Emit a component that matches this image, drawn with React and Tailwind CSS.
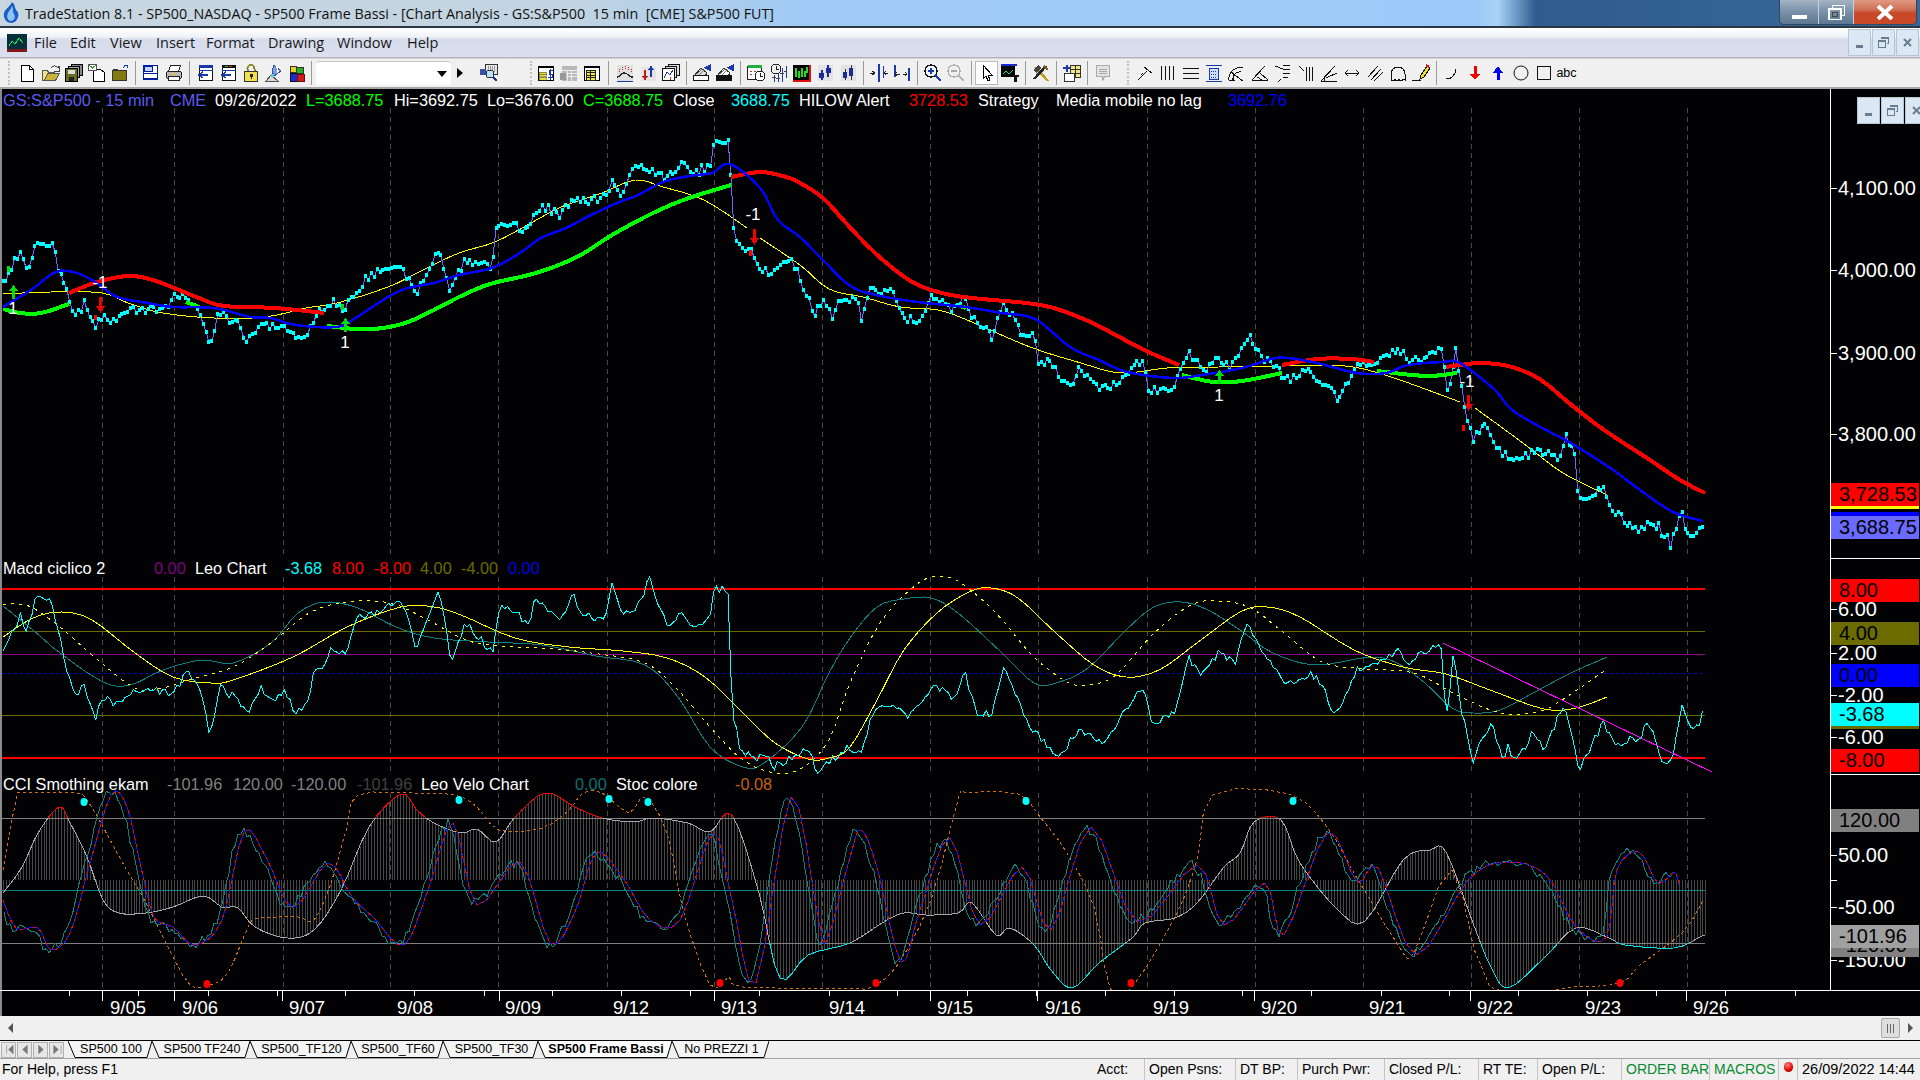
const parse = (s) => s.trim().split(/\s+/).map((p) => p.split(",").map(Number));

// small seeded random so the noisy series stay the same between renders
function rng(seed) {
  let a = seed;
  return () => {
    a = (a * 1664525 + 1013904223) % 4294967296;
    return a / 4294967296;
  };
}

const toStr = (pts) => pts.map((p) => `${p[0].toFixed(1)},${p[1].toFixed(1)}`).join(" ");

function smooth(pts, n = 4) {
  const out = [];
  for (let i = 0; i < pts.length - 1; i++) {
    const p0 = pts[Math.max(i - 1, 0)];
    const p1 = pts[i];
    const p2 = pts[i + 1];
    const p3 = pts[Math.min(i + 2, pts.length - 1)];
    for (let j = 0; j < n; j++) {
      const t = j / n;
      const f = (a, b, c, d) =>
        0.5 * (2 * b + (c - a) * t + (2 * a - 5 * b + 4 * c - d) * t * t + (3 * b - a - 3 * c + d) * t * t * t);
      out.push([f(p0[0], p1[0], p2[0], p3[0]), f(p0[1], p1[1], p2[1], p3[1])]);
    }
  }
  out.push(pts[pts.length - 1]);
  return out;
}

function interp(pts, x) {
  for (let i = 0; i < pts.length - 1; i++) {
    if (x >= pts[i][0] && x <= pts[i + 1][0]) {
      const t = (x - pts[i][0]) / (pts[i + 1][0] - pts[i][0] || 1);
      return pts[i][1] + (pts[i + 1][1] - pts[i][1]) * t;
    }
  }
  return pts[pts.length - 1][1];
}

function jag(pts, step, amp, seed) {
  const r = rng(seed);
  const out = [];
  const x0 = pts[0][0];
  const x1 = pts[pts.length - 1][0];
  for (let x = x0; x <= x1; x += step) {
    out.push([x, interp(pts, x) + (r() - 0.5) * amp]);
  }
  return out;
}

const priceKeys = parse(`3,283 10,270 20,252 26,272 36,243 54,244 57,265 64,283 67,293 76,317 84,303 96,332 99,317 115,321 128,310 168,308 176,295 189,298 202,317 210,346 219,310 227,318 237,323 247,341 260,325 283,327 296,339 309,332 316,315 332,302 344,308 352,297 367,278 383,267 403,272 416,293 423,282 439,250 449,290 464,262 482,263 492,268 497,223 515,225 526,232 541,205 561,215 569,203 605,198 612,182 621,193 638,163 663,178 686,163 694,173 712,165 713,142 730,140 732,223 737,243 753,253 758,267 770,273 791,260 800,277 814,315 823,300 832,317 840,302 857,297 861,322 869,290 892,292 906,318 921,322 929,297 955,310 964,295 972,317 992,337 1004,303 1024,337 1035,337 1038,363 1047,360 1070,388 1078,368 1101,388 1121,383 1127,372 1144,360 1147,390 1173,390 1188,352 1205,372 1216,358 1231,368 1251,337 1259,353 1288,380 1308,368 1337,398 1357,367 1400,350 1411,362 1442,349 1448,400 1456,350 1465,410 1473,442 1483,422 1503,455 1518,460 1538,450 1558,460 1566,433 1575,458 1579,502 1604,488 1612,510 1640,533 1648,520 1653,528 1659,523 1662,540 1667,537 1671,547 1675,530 1683,508 1686,533 1698,533 1701,523 1705,527`);
const price = jag(priceKeys, 2.9, 8, 7);

const blue = smooth(parse(`3,307 31,290 56,272 77,273 97,283 117,297 148,303 173,307 214,308 250,317 270,318 296,325 337,327 357,317 388,297 408,288 434,283 459,275 492,268 520,253 541,238 566,228 587,217 617,203 638,195 663,182 689,176 712,173 730,164 760,188 778,220 800,237 823,260 852,287 886,297 926,303 966,307 1001,313 1035,319 1070,347 1099,360 1127,372 1173,378 1202,375 1242,368 1271,359 1288,358 1317,363 1357,373 1386,373 1408,365 1443,362 1460,363 1495,390 1512,410 1546,430 1569,442 1609,467 1640,490 1673,512 1703,521`));
const yellow1 = smooth(parse(`3,294 51,292 102,293 128,303 163,313 214,318 265,317 306,308 337,303 388,287 423,270 459,253 495,242 531,223 561,207 602,193 635,180 663,187 704,200 747,228`));
const yellow2 = smooth(parse(`760,238 800,265 829,289 863,297 900,307 938,310 972,322 1030,347 1081,363 1121,373 1167,368 1219,367 1282,366 1345,366 1391,377 1460,402`));
const yellow3 = smooth(parse(`1475,408 1523,443 1563,473 1607,495`));

const thick = [
  ["#00ff00", `3,309 20,313 41,313 69,304`],
  ["#ff0000", `69,293 97,282 128,276 153,280 184,292 199,298 224,306 275,308 324,313`],
  ["#00ff00", `186,302 199,307`],
  ["#00ff00", `327,326 357,329 383,328 408,322 434,310 459,297 490,284 536,273 577,257 612,235 653,213 689,198 731,185`],
  ["#ff0000", `731,177 760,172 786,177 800,183 823,198 846,223 875,253 909,280 938,292 972,298 1041,305 1081,318 1110,332 1144,350 1179,365`],
  ["#00ff00", `960,306 966,308`],
  ["#00ff00", `1182,375 1213,382 1242,381 1282,373`],
  ["#ff0000", `1282,365 1317,359 1351,359 1374,362`],
  ["#00ff00", `1377,371 1426,376 1457,373`],
  ["#ff0000", `1446,367 1460,365 1483,363 1512,367 1541,380 1569,403 1604,430 1650,460 1680,480 1705,493`],
];

const gridX = [102, 174, 283, 390, 498, 607, 714, 822, 930, 1038, 1147, 1255, 1363, 1471, 1579, 1687];

const macd = jag(parse(`3,653 22,612 25,639 36,597 51,600 70,683 76,698 84,685 96,717 103,698 117,705 127,693 152,690 171,695 187,673 201,690 210,738 220,687 228,693 238,700 247,713 260,688 271,702 285,688 295,715 309,702 313,672 325,663 332,648 346,655 358,618 379,610 398,602 407,613 416,650 439,587 451,662 466,623 493,653 499,608 515,610 528,628 534,600 561,622 573,592 577,608 588,615 604,623 612,583 623,613 637,608 650,578 666,625 680,613 694,628 710,618 714,587 729,592 730,650 732,710 740,747 751,758 770,755 772,768 808,747 816,772 835,757 850,747 861,752 872,715 893,702 907,717 920,707 934,682 956,702 964,670 977,713 991,715 1004,668 1029,725 1040,738 1060,756 1080,728 1102,743 1116,725 1143,687 1152,723 1174,712 1189,657 1202,677 1219,653 1235,662 1248,620 1254,640 1270,663 1286,687 1311,673 1322,683 1335,717 1357,670 1384,660 1400,647 1406,663 1441,645 1446,722 1454,650 1462,713 1473,760 1492,720 1503,763 1507,745 1516,762 1533,732 1544,748 1565,703 1579,770 1603,723 1617,743 1640,738 1647,723 1653,733 1662,758 1672,762 1683,698 1687,723 1698,728 1702,713 1705,713`), 2.9, 8, 11);
const macdTeal = smooth(parse(`3,606 33,630 60,653 103,682 130,685 163,670 201,660 233,663 271,643 298,613 325,602 358,608 396,627 434,638 488,642 542,645 596,656 645,665 678,697 710,747 743,767 764,763 802,727 829,673 850,638 877,607 904,599 931,598 958,613 1002,653 1034,683 1056,683 1088,668 1126,630 1154,607 1181,602 1208,610 1240,630 1273,653 1316,665 1370,657 1397,663 1425,683 1452,708 1473,713 1500,710 1533,693 1571,673 1607,657`));
const macdYellow = smooth(parse(`3,637 33,618 62,612 92,620 135,653 173,677 211,683 233,680 293,657 347,627 401,607 434,607 461,615 515,638 569,647 623,651 667,658 705,677 743,713 775,743 808,759 829,758 850,747 877,700 904,650 937,613 969,592 991,588 1018,598 1056,633 1094,665 1126,677 1159,670 1197,643 1240,612 1267,607 1300,617 1354,650 1403,667 1446,674 1490,690 1544,709 1576,708 1607,697`));
const macdDash = smooth(parse(`3,605 16,604 33,608 60,627 98,660 135,688 163,688 195,678 233,667 271,643 309,613 347,602 390,603 428,620 466,640 499,646 542,648 591,653 645,663 678,690 710,727 743,760 775,773 802,768 829,740 850,683 882,620 920,582 945,577 964,585 996,613 1034,657 1067,682 1088,685 1116,675 1154,633 1191,605 1219,601 1251,608 1284,633 1322,662 1365,669 1414,673 1457,695 1500,713 1538,712 1565,698 1607,669`));

const cci = smooth(parse(`3,893 22,867 38,833 59,807 70,823 87,857 103,900 119,913 146,913 173,907 203,896 222,907 238,908 255,927 287,938 314,930 341,890 369,827 401,794 417,810 434,823 461,833 477,829 496,842 515,817 545,793 575,807 602,818 634,822 653,818 688,823 710,832 732,815 759,893 780,978 808,955 850,943 882,923 904,913 926,915 958,913 972,903 996,935 1010,928 1034,945 1051,970 1072,988 1099,963 1132,938 1145,923 1175,918 1197,903 1224,867 1240,853 1254,822 1281,820 1300,863 1338,910 1365,921 1403,860 1430,850 1446,852 1473,923 1490,965 1508,988 1544,958 1576,928 1609,938 1625,945 1674,948 1700,937 1705,935`));
const velo = smooth(parse(`3,900 16,928 38,928 51,950 70,933 89,867 111,795 127,807 141,867 154,917 173,927 195,945 222,920 244,832 266,857 293,908 328,863 352,897 374,918 404,945 428,890 453,823 477,905 520,862 550,943 575,912 596,853 623,878 650,920 680,920 713,833 732,900 756,983 791,797 818,917 827,940 850,857 861,830 877,867 901,962 920,910 950,838 980,925 1022,867 1051,930 1091,827 1137,922 1197,865 1224,925 1265,883 1284,935 1327,833 1357,882 1378,868 1416,955 1468,880 1506,862 1546,875 1576,927 1606,938 1617,870 1639,852 1658,883 1674,872 1679,885`));
const veloTeal = (() => {
  const r = rng(23);
  const j = jag(velo, 3, 8, 31);
  return j.map((p) => [p[0] - 5, p[1] + (r() - 0.5) * 3]).filter((p) => p[0] > 2);
})();
const stoc = smooth(parse(`3,870 16,800 24,793 76,793 89,803 103,827 125,867 146,903 168,947 190,985 209,985 228,973 249,925 260,918 298,917 314,920 331,883 347,827 358,795 412,793 455,795 477,807 499,830 542,828 569,810 583,793 602,793 629,813 645,797 667,833 683,910 710,985 729,977 743,987 850,988 869,988 896,967 931,900 958,800 967,793 1018,794 1040,817 1067,853 1094,907 1110,988 1132,987 1175,917 1197,860 1213,795 1289,794 1327,827 1354,873 1397,943 1414,953 1452,870 1490,987 1571,987 1620,983 1640,965 1683,932 1703,900`), 3);

const hist = [];
for (let x = 3; x < 1706; x += 2.9) hist.push([Math.round(x), interp(cci, x)]);

const minorTicks = [69, 138, 208, 277, 345, 414, 484, 552, 621, 690, 759, 829, 897, 967, 1036, 1105, 1174, 1242, 1311, 1381, 1449, 1518, 1587, 1656, 1725, 1795];
const majorTicks = [102, 174, 282, 499, 714, 930, 1037, 1254, 1470, 1686];

const Line = ({ pts, color, w = 1, dash }) => (
  <polyline points={toStr(pts)} fill="none" stroke={color} strokeWidth={w} strokeDasharray={dash} shapeRendering="crispEdges" />
);

function Grid({ y1, y2 }) {
  return gridX.map((x) => <line key={x} x1={x} x2={x} y1={y1} y2={y2} stroke="#4a4a4a" strokeDasharray="5 4" shapeRendering="crispEdges" />);
}

function Hline({ y, color, w = 1, dash }) {
  return <line x1="2" x2="1705" y1={y} y2={y} stroke={color} strokeWidth={w} strokeDasharray={dash} shapeRendering="crispEdges" />;
}

const UpArrow = ({ x, y }) => (
  <g fill="#00e000" shapeRendering="crispEdges">
    <rect x={x - 1} y={y + 5} width="3" height="9" />
    <path d={`M${x - 4} ${y + 6}L${x + 0.5} ${y}L${x + 5} ${y + 6}z`} />
  </g>
);
const DownArrow = ({ x, y }) => (
  <g fill="#f00000" shapeRendering="crispEdges">
    <rect x={x - 1} y={y} width="3" height="10" />
    <path d={`M${x - 4} ${y + 9}L${x + 0.5} ${y + 16}L${x + 5} ${y + 9}z`} />
  </g>
);

function PricePlot() {
  return (
    <svg width="1830" height="469" viewBox="0 89 1830 469" className="shrink-0">
      <Grid y1={108} y2={555} />
      <Line pts={yellow1} color="#ffff00" />
      <Line pts={yellow2} color="#ffff00" />
      <Line pts={yellow3} color="#ffff00" />
      <Line pts={price} color="#6a6aff" />
      {price.map((p, i) => (
        <rect key={i} x={p[0] - 1.5} y={p[1] - 2} width="3" height="4" fill="#00ffff" shapeRendering="crispEdges" />
      ))}
      {thick.map(([c, s], i) => (
        <Line key={i} pts={smooth(parse(s))} color={c} w={4} />
      ))}
      <Line pts={blue} color="#0000ff" w={2.5} />
      <UpArrow x={13} y={285} />
      <UpArrow x={345} y={318} />
      <UpArrow x={1219} y={370} />
      <DownArrow x={100} y={297} />
      <DownArrow x={754} y={229} />
      <DownArrow x={1468} y={395} />
      <rect x="7" y="266" width="3" height="6" fill="#00e000" />
      <rect x="341" y="304" width="3" height="6" fill="#00e000" />
      <rect x="94" y="315" width="3" height="5" fill="#ff0000" />
      <rect x="749" y="250" width="3" height="6" fill="#ff0000" />
      <rect x="1462" y="425" width="3" height="6" fill="#ff0000" />
      <g fill="#fff" fontSize="17" fontFamily="Liberation Sans" textAnchor="middle">
        <text x="13" y="314">1</text>
        <text x="345" y="348">1</text>
        <text x="1219" y="401">1</text>
        <text x="100" y="288">-1</text>
        <text x="753" y="220">-1</text>
        <text x="1467" y="387">-1</text>
      </g>
    </svg>
  );
}

function MacdPlot() {
  return (
    <svg width="1830" height="216" viewBox="0 559 1830 216" className="shrink-0">
      <Grid y1={577} y2={772} />
      <Hline y={631} color="#6b6b00" />
      <Hline y={654} color="#8b008b" />
      <Hline y={673} color="#0000d0" dash="3 3" />
      <Hline y={715} color="#6b6b00" />
      <Hline y={589} color="#ff0000" w={1.5} />
      <Hline y={758} color="#ff0000" w={1.5} />
      <Line pts={macdTeal} color="#0f8080" />
      <Line pts={macdDash} color="#ffff00" dash="3 5" />
      <Line pts={macdYellow} color="#ffff00" />
      <Line pts={macd} color="#00ffff" />
      <line x1="1443" y1="643" x2="1712" y2="772" stroke="#ff00ff" shapeRendering="crispEdges" />
    </svg>
  );
}

function CciPlot() {
  return (
    <svg width="1830" height="215" viewBox="0 775 1830 215" className="shrink-0">
      <defs>
        <clipPath id="over">
          <rect x="0" y="775" width="1830" height="43" />
        </clipPath>
        <clipPath id="under">
          <rect x="0" y="943" width="1830" height="47" />
        </clipPath>
      </defs>
      <Grid y1={793} y2={990} />
      {hist.map(([x, y]) => (
        <line key={x} x1={x} x2={x} y1="880" y2={y} stroke="#464646" shapeRendering="crispEdges" />
      ))}
      <Hline y={818} color="#808080" />
      <Hline y={890} color="#0f8080" />
      <Hline y={943} color="#808080" />
      <Line pts={stoc} color="#d0700f" dash="3 3" />
      <Line pts={cci} color="#a8a8a8" />
      <g clipPath="url(#over)">
        <Line pts={cci} color="#ff0000" />
      </g>
      <g clipPath="url(#under)">
        <Line pts={cci} color="#00e5e5" />
      </g>
      <Line pts={veloTeal} color="#0f8080" />
      <Line pts={velo} color="#1414ff" />
      <Line pts={velo} color="#ff0000" dash="3 4" />
      {[[84, 802], [459, 800], [609, 799], [648, 802], [1026, 801], [1293, 801]].map(([x, y]) => (
        <ellipse key={x} cx={x} cy={y} rx="3.5" ry="4" fill="#00ffff" />
      ))}
      {[[207, 984], [720, 983], [876, 983], [1131, 983], [1620, 983]].map(([x, y]) => (
        <ellipse key={x} cx={x} cy={y} rx="3.5" ry="4" fill="#ff0000" />
      ))}
    </svg>
  );
}

function Legend({ items, className }) {
  return (
    <div className={`absolute left-[3px] flex text-[16.3px] leading-[18px] whitespace-nowrap ${className}`}>
      {items.map(([t, c, w], i) => (
        <span key={i} className={`${c} ${w}`}>
          {t}
        </span>
      ))}
    </div>
  );
}

const priceLegend = [
  ["GS:S&P500 - 15 min", "text-[#5a5af0]", "w-[167px]"],
  ["CME", "text-[#5a5af0]", "w-[45px]"],
  ["09/26/2022", "text-white", "w-[91px]"],
  ["L=3688.75", "text-[#00ff00]", "w-[88px]"],
  ["Hi=3692.75", "text-white", "w-[93px]"],
  ["Lo=3676.00", "text-white", "w-[96px]"],
  ["C=3688.75", "text-[#00ff00]", "w-[90px]"],
  ["Close", "text-white", "w-[58px]"],
  ["3688.75", "text-[#00ffff]", "w-[68px]"],
  ["HILOW Alert", "text-white", "w-[110px]"],
  ["3728.53", "text-[#ff0000]", "w-[69px]"],
  ["Strategy", "text-white", "w-[78px]"],
  ["Media mobile no lag", "text-white", "w-[172px]"],
  ["3692.76", "text-[#0000ff]", "w-[70px]"],
];
const macdLegend = [
  ["Macd ciclico 2", "text-white", "w-[151px]"],
  ["0.00", "text-[#800080]", "w-[41px]"],
  ["Leo Chart", "text-white", "w-[90px]"],
  ["-3.68", "text-[#00ffff]", "w-[47px]"],
  ["8.00", "text-[#ff0000]", "w-[42px]"],
  ["-8.00", "text-[#ff0000]", "w-[46px]"],
  ["4.00", "text-[#6b6b00]", "w-[41px]"],
  ["-4.00", "text-[#6b6b00]", "w-[47px]"],
  ["0.00", "text-[#0000e0]", "w-[40px]"],
];
const cciLegend = [
  ["CCI Smothing ekam", "text-white", "w-[164px]"],
  ["-101.96", "text-[#808080]", "w-[66px]"],
  ["120.00", "text-[#808080]", "w-[58px]"],
  ["-120.00", "text-[#808080]", "w-[66px]"],
  ["-101.96", "text-[#404040]", "w-[64px]"],
  ["Leo Velo Chart", "text-white", "w-[154px]"],
  ["0.00", "text-[#0f7070]", "w-[41px]"],
  ["Stoc colore", "text-white", "w-[119px]"],
  ["-0.08", "text-[#c8600f]", "w-[50px]"],
];

const AxisBox = ({ className, children }) => (
  <div className={`absolute left-0 right-[1px] h-[23px] leading-[23px] pl-[8px] text-[20px] text-black ${className}`}>{children}</div>
);
const AxisTick = ({ className, children }) => (
  <div className={`absolute left-0 h-[24px] flex items-center text-[20px] text-white ${className}`}>
    <span className="w-[6px] h-px bg-white mr-[1px]" />
    {children}
  </div>
);

function Axis1() {
  return (
    <div className="relative flex-1 border-l border-b border-white">
      <AxisTick className="top-[87px]">4,100.00</AxisTick>
      <AxisTick className="top-[169px]">4,000.00</AxisTick>
      <AxisTick className="top-[252px]">3,900.00</AxisTick>
      <AxisTick className="top-[333px]">3,800.00</AxisTick>
      <AxisBox className="top-[394px] bg-[#ff0000]">3,728.53</AxisBox>
      <div className="absolute left-0 right-[1px] top-[417px] h-[3px] bg-[#ffff00]" />
      <div className="absolute left-0 top-[420px] h-[3px] overflow-hidden pl-[8px] text-[20px] leading-[23px] text-white">3,708.09</div>
      <div className="absolute left-0 right-[1px] top-[423px] h-[4px] bg-[#0000ff]" />
      <AxisBox className="top-[427px] bg-[#6a6aff]">3,688.75</AxisBox>
    </div>
  );
}

function Axis2() {
  return (
    <div className="relative flex-1 border-l border-b border-white">
      <AxisBox className="top-[20px] bg-[#ff0000]">8.00</AxisBox>
      <AxisTick className="top-[38px]">6.00</AxisTick>
      <AxisBox className="top-[63px] bg-[#6b6b00]">4.00</AxisBox>
      <AxisTick className="top-[82px]">2.00</AxisTick>
      <AxisBox className="top-[105px] bg-[#0000ff]">0.00</AxisBox>
      <AxisTick className="top-[124px]">-2.00</AxisTick>
      <AxisBox className="top-[144px] bg-[#00ffff]">-3.68</AxisBox>
      <div className="absolute left-0 right-[1px] top-[167px] h-[3px] bg-[#6b6b00]" />
      <AxisTick className="top-[166px]">-6.00</AxisTick>
      <AxisBox className="top-[190px] bg-[#ff0000]">-8.00</AxisBox>
    </div>
  );
}

function Axis3() {
  return (
    <div className="relative flex-1 border-l border-white">
      <AxisBox className="top-[34px] bg-[#808080]">120.00</AxisBox>
      <AxisTick className="top-[68px]">50.00</AxisTick>
      <div className="absolute left-0 top-[105px] w-[6px] h-px bg-white" />
      <AxisTick className="top-[120px]">-50.00</AxisTick>
      <AxisTick className="top-[173px]">-150.00</AxisTick>
      <AxisBox className="top-[159px] bg-[#808080]">-120.00</AxisBox>
      <AxisBox className="top-[150px] bg-[#a0a0a0]">-101.96</AxisBox>
    </div>
  );
}

function XAxis() {
  const labels = ["9/07", "9/08", "9/09", "9/12", "9/13", "9/14", "9/15", "9/16", "9/19", "9/20", "9/21", "9/22", "9/23", "9/26"];
  return (
    <div className="relative h-[26px] shrink-0 border-t border-white pl-[110px] pt-[7px] flex text-[18.5px] leading-[20px] text-white">
      <svg width="1830" height="12" className="absolute left-0 top-0">
        {minorTicks.map((x) => (
          <line key={x} x1={x} x2={x} y1="0" y2="5" stroke="#fff" shapeRendering="crispEdges" />
        ))}
        {majorTicks.map((x) => (
          <line key={x} x1={x} x2={x} y1="0" y2="10" stroke="#fff" shapeRendering="crispEdges" />
        ))}
      </svg>
      <span className="w-[72px]">9/05</span>
      <span className="w-[107px]">9/06</span>
      {labels.map((l) => (
        <span key={l} className="w-[108px]">
          {l}
        </span>
      ))}
    </div>
  );
}

// toolbar pieces
const I = ({ children }) => (
  <svg width="20" height="20" viewBox="0 0 20 20" shapeRendering="crispEdges">
    {children}
  </svg>
);
const Btn = ({ children, className = "" }) => (
  <div className={`w-[23px] h-[24px] shrink-0 flex items-center justify-center ${className}`}>{children}</div>
);
const Sep = () => (
  <div className="w-[8px] h-[24px] shrink-0 flex justify-center">
    <div className="w-px h-full bg-[#9a9a9a]" />
  </div>
);
const Grip = () => <div className="h-[24px] border-l-2 border-dotted border-[#c0c0c0]" />;

const WindowBase = ({ children, top = "#000" }) => (
  <I>
    <rect x="2.5" y="3.5" width="15" height="14" fill="#fff" stroke="#000" />
    <rect x="2" y="3" width="16" height="2" fill={top} />
    {children}
  </I>
);

const DocIcon = () => (
  <I>
    <path d="M3.5 2.5h8l4 4v12h-12z" fill="#fff" stroke="#000" />
    <path d="M11.5 2.5v4h4" fill="none" stroke="#000" />
  </I>
);
const OpenIcon = () => (
  <I>
    <path d="M1.5 7.5h5l1 2h6v8h-12z" fill="#f4e28a" stroke="#555" />
    <path d="M3.5 17.5l3-7h12l-4 7z" fill="#c8b23c" stroke="#555" />
    <path d="M10 5c2-3 5-3 7 0l1-2v5h-5" fill="none" stroke="#444" />
  </I>
);
const SaveAllIcon = () => (
  <I>
    <rect x="7.5" y="1.5" width="11" height="11" fill="#888" stroke="#000" />
    <rect x="4.5" y="3.5" width="11" height="11" fill="#aaa" stroke="#000" />
    <rect x="1.5" y="5.5" width="12" height="13" fill="#6b6b22" stroke="#000" />
    <rect x="4" y="7" width="7" height="4" fill="#ddd" />
    <rect x="5" y="14" width="5" height="4" fill="#222" />
  </I>
);
const DocMailIcon = () => (
  <I>
    <path d="M6.5 6.5h7l4 3v9h-11z" fill="#fff" stroke="#000" />
    <rect x="1.5" y="1.5" width="8" height="6" fill="#fff" stroke="#555" />
    <path d="M2 2l3.5 3 3.5-3" fill="none" stroke="#3a9a3a" />
  </I>
);
const FolderUpIcon = () => (
  <I>
    <rect x="2.5" y="7.5" width="14" height="10" fill="#807a10" stroke="#333" />
    <rect x="3" y="6" width="5" height="2" fill="#333" />
    <path d="M13 5l3-3M14 2h3v3" fill="none" stroke="#1a3aaa" />
  </I>
);
const PreviewIcon = () => (
  <I>
    <rect x="2.5" y="2.5" width="14" height="14" fill="#fff" stroke="#00209a" />
    <rect x="3" y="3" width="8" height="5" fill="#c0d0ff" stroke="#00209a" />
    <rect x="2" y="10" width="15" height="1" fill="#00209a" />
    <rect x="2" y="15" width="15" height="2" fill="#00209a" />
  </I>
);
const PrintIcon = () => (
  <I>
    <path d="M6.5 2.5h10l-2 6h-10z" fill="#fff" stroke="#222" />
    <rect x="2.5" y="8.5" width="15" height="7" rx="2" fill="#b8b8b8" stroke="#222" />
    <rect x="4.5" y="13.5" width="11" height="4" fill="#fff" stroke="#222" />
    <rect x="8" y="10" width="3" height="2" fill="#e8c020" />
  </I>
);
const ListBackIcon = ({ accent }) => (
  <I>
    <rect x="4.5" y="2.5" width="13" height="15" fill="#fff" stroke="#111" />
    <rect x="4" y="2" width="14" height="3" fill={accent ? "#111" : "#1a3aaa"} />
    {accent && <rect x="7" y="3" width="3" height="1" fill="#20c020" />}
    {accent && <rect x="11" y="3" width="3" height="1" fill="#e02020" />}
    <rect x="4" y="7" width="14" height="1" fill="#1a3aaa" />
    <path d="M8 9l-4 3 4 3M4 12h9" fill="none" stroke="#1a3aaa" strokeWidth="1.4" />
  </I>
);
const LockIcon = () => (
  <I>
    <path d="M6.5 9V5.5a3.5 3.5 0 017 0V9" fill="none" stroke="#8a8a30" strokeWidth="2" />
    <rect x="3.5" y="8.5" width="13" height="10" fill="#f0e050" stroke="#333" />
    <rect x="9" y="11" width="3" height="3" fill="#222" />
    <rect x="10" y="14" width="1" height="2" fill="#222" />
  </I>
);
const DishIcon = () => (
  <I>
    <path d="M10 2l7 6-7 5-2-5z" fill="#7c9ae0" stroke="#3a50a0" />
    <path d="M12 3l3 6M14 2l-1 8" stroke="#fff" />
    <path d="M2 18l5-6 7 6z" fill="#d8d8d8" stroke="#555" />
    <rect x="7" y="11" width="3" height="3" fill="#50d0d0" />
  </I>
);
const CubesIcon = () => (
  <I>
    <rect x="3" y="3" width="6" height="6" fill="#e8d020" stroke="#333" />
    <rect x="9" y="4" width="7" height="6" fill="#20b020" stroke="#333" />
    <rect x="3" y="10" width="7" height="8" fill="#1a2acc" stroke="#111" />
    <rect x="10" y="11" width="7" height="7" fill="#d81818" stroke="#611" />
  </I>
);
const SearchChartIcon = () => (
  <I>
    <rect x="6.5" y="1.5" width="12" height="10" fill="#e8e8e8" stroke="#333" />
    <path d="M9 3v6M11 3v6M13 3v6M15 3v6" stroke="#999" />
    <rect x="1" y="6" width="6" height="6" fill="#3a50a0" />
    <circle cx="11" cy="11" r="4" fill="#b8e0f8" stroke="#333" />
    <path d="M14 14l4 4" stroke="#1a2a80" strokeWidth="2" />
  </I>
);
const DollarWinIcon = () => (
  <WindowBase>
    <rect x="3" y="9" width="7" height="2" fill="#e8e030" stroke="#333" strokeWidth=".5" />
    <rect x="3" y="11" width="7" height="2" fill="#e8e030" stroke="#333" strokeWidth=".5" />
    <rect x="3" y="14" width="7" height="3" fill="#e8e030" stroke="#333" strokeWidth=".5" />
    <path d="M17 7h-4v4h3v3h-4M14.500 5.500v11" fill="none" stroke="#1a3aaa" />
  </WindowBase>
);
const GrayWinIcon = () => (
  <I>
    <rect x="3" y="3" width="15" height="15" fill="#b8b8b8" />
    <path d="M3 7h15M3 10h15M3 13h15M8 7v11M12 7v11" stroke="#eee" />
    <rect x="1" y="10" width="6" height="7" fill="#999" />
  </I>
);
const TableWinIcon = () => (
  <WindowBase>
    <rect x="4" y="7" width="9" height="10" fill="#f4e840" stroke="#222" />
    <path d="M4 9.500h9M4 12h9M4 14.500h9M8.500 7v10" stroke="#222" />
  </WindowBase>
);
const CandleFanIcon = () => (
  <I>
    <rect x="2" y="2" width="16" height="16" fill="#e0e0e0" />
    <path d="M4 9V6M7 7V3M10 6V2M13 7V3M16 9V6" stroke="#d02020" strokeDasharray="1 1" />
    <path d="M2 14c4 0 4-5 8-4s4 5 8 4" fill="none" stroke="#222" strokeWidth="1.3" />
    <path d="M2 18h16" stroke="#1a3aaa" />
  </I>
);
const ArrowsIcon = () => (
  <I>
    <rect x="3" y="4" width="15" height="14" fill="#e4e4e4" />
    <path d="M7 7v8M5 13l2 3 2-3" fill="none" stroke="#c01818" strokeWidth="1.5" />
    <path d="M13 14V5M11 7l2-3 2 3" fill="none" stroke="#1a3aaa" strokeWidth="1.5" />
  </I>
);
const StackedIcon = () => (
  <I>
    <rect x="7.5" y="1.5" width="11" height="11" fill="#ddd" stroke="#111" />
    <rect x="4.500" y="3.500" width="11" height="11" fill="#ddd" stroke="#111" />
    <rect x="1.500" y="5.500" width="12" height="12" fill="#fff" stroke="#111" />
    <path d="M3 15l3-6 3 3 3-5" fill="none" stroke="#1a3aaa" />
    <path d="M9 14v3" stroke="#d02020" />
  </I>
);
const HandIcon = ({ dark }) => (
  <I>
    <path d="M2 13l7-8 6 5-2 3z" fill={dark ? "#fff" : "#ddd"} stroke="#333" />
    <path d="M5 11l5-5M7 12l5-5" stroke="#777" />
    <rect x="1.500" y="12.500" width="15" height="5" fill={dark ? "#111" : "#fff"} stroke="#111" />
    <path d="M12 5l6-3v6" fill="#1a3aaa" stroke="#1a3aaa" />
  </I>
);
const CalendarIcon = () => (
  <I>
    <rect x="1.500" y="3.500" width="14" height="13" fill="#fff" stroke="#222" />
    <rect x="2" y="2" width="14" height="3" fill="#20b040" />
    <path d="M4 8h2M8 8h2M12 8h2M4 11h2" stroke="#c03030" />
    <circle cx="14" cy="13" r="5" fill="#fff" stroke="#222" />
    <path d="M14 10v3h3" fill="none" stroke="#222" />
  </I>
);
const ClockBarsIcon = () => (
  <I>
    <circle cx="7" cy="6" r="5" fill="#eee" stroke="#222" />
    <path d="M7 3v3h3" fill="none" stroke="#222" />
    <path d="M5 12v7M9 11v8M13 5v14M17 3v12" stroke="#1a3aaa" />
    <path d="M3 14h4M7 15h4M11 10h4M15 8h3" stroke="#444" />
  </I>
);
const GreenBarsIcon = () => (
  <I>
    <rect x="1" y="2" width="17" height="16" fill="#000" />
    <path d="M4 5v9M7 8v7M10 5v9M13 8v6M15 4v6" stroke="#20e020" strokeWidth="1.300" />
    <rect x="17" y="2" width="2" height="16" fill="#e01010" />
    <rect x="1" y="17" width="18" height="2" fill="#e01010" />
  </I>
);
const BlueSwapIcon = () => (
  <I>
    <rect x="3" y="2" width="15" height="16" fill="#e2e2e2" />
    <path d="M7 7v10" stroke="#1a2a9a" strokeWidth="2.500" />
    <rect x="4" y="10" width="5" height="5" fill="#1a2a9a" />
    <path d="M13 2v12" stroke="#1a2a9a" strokeWidth="2.500" />
    <rect x="11" y="5" width="5" height="5" fill="#1a2a9a" />
  </I>
);
const CandleIcon = () => (
  <I>
    <rect x="3" y="2" width="15" height="16" fill="#e2e2e2" />
    <path d="M7 6v11M13 2v15" stroke="#333" />
    <rect x="5" y="9" width="4" height="6" fill="#1a2a9a" />
    <rect x="11" y="5" width="4" height="8" fill="#1a2a9a" />
  </I>
);
const SqueezeIn = () => (
  <I>
    <path d="M10 1v18" stroke="#1a3aaa" strokeWidth="1.400" />
    <path d="M14 3v12" stroke="#1a3aaa" />
    <path d="M1 10h5M3 8l3 2-3 2M19 10h-3M17 8l-2 2 2 2" fill="none" stroke="#222" />
  </I>
);
const SqueezeOut = () => (
  <I>
    <path d="M3 2v12" stroke="#1a3aaa" strokeWidth="1.400" />
    <path d="M17 5v13" stroke="#1a3aaa" strokeWidth="1.400" />
    <path d="M5 9l-2 2 2 2M3 11h5M11 11h4M13 9l2 2-2 2" fill="none" stroke="#222" />
  </I>
);
const ZoomIcon = ({ plus, gray }) => {
  const c = gray ? "#b0b0b0" : "#111";
  return (
    <I>
      <circle cx="8" cy="8" r="6" fill={gray ? "#efefef" : "#eef6ff"} stroke={c} strokeWidth="1.500" />
      <path d="M5 8h6" stroke={gray ? "#aaa" : "#1a3aaa"} strokeWidth="1.500" />
      {plus && <path d="M8 5v6" stroke="#1a3aaa" strokeWidth="1.500" />}
      <path d="M12 12l6 6" stroke={gray ? "#b8b8b8" : "#1a3aaa"} strokeWidth="2.500" />
    </I>
  );
};
const CursorIcon = () => (
  <I>
    <path d="M6 2v14l3-3 2 5 2-1-2-5h4z" fill="#fff" stroke="#000" />
  </I>
);
const ChartTextIcon = () => (
  <I>
    <rect x="1" y="1" width="16" height="2" fill="#1a2acc" />
    <rect x="1" y="3" width="14" height="11" fill="#050505" />
    <path d="M3 11l3-3 3 3 4-4" fill="none" stroke="#20e060" />
    <path d="M12 12h7v2h-2v5h-3v-5h-2z" fill="#111" />
  </I>
);
const HammerIcon = () => (
  <I>
    <path d="M4 4l13 14" stroke="#c0a020" strokeWidth="2.500" />
    <path d="M15 3L3 16" stroke="#222" strokeWidth="2.500" />
    <path d="M2 7l5-5 3 3-5 5z" fill="#444" />
    <path d="M13 3l4 4" stroke="#806010" strokeWidth="2" />
  </I>
);
const PlusTableIcon = () => (
  <I>
    <rect x="8" y="2" width="10" height="12" fill="#f4e880" stroke="#333" />
    <path d="M8 6h10M8 10h10M13 2v12" stroke="#333" />
    <rect x="2.500" y="10.500" width="10" height="8" fill="#fff" stroke="#333" />
    <path d="M1 5h7M4.500 1.500v7" stroke="#1a3aaa" strokeWidth="2" />
  </I>
);
const NoteGrayIcon = () => (
  <I>
    <path d="M3.500 2.500h13v11h-5l-2 4v-4h-6z" fill="#e4e4e4" stroke="#aaa" />
    <path d="M6 6h8M6 8h8M6 10h8" stroke="#aaa" />
  </I>
);

const tool = (d) => (
  <I>
    <path d={d} fill="none" stroke="#111" />
  </I>
);

function Toolbar() {
  return (
    <div className="h-[31px] shrink-0 bg-[#f0f0f0] border-t border-[#d4d4d4] border-b-2 border-b-[#a8a8a8] flex items-center pl-[8px]">
      <Grip />
      <div className="w-[6px] shrink-0" />
      <Btn><DocIcon /></Btn>
      <Btn><OpenIcon /></Btn>
      <Btn><SaveAllIcon /></Btn>
      <Btn><DocMailIcon /></Btn>
      <Btn><FolderUpIcon /></Btn>
      <Sep />
      <Btn><PreviewIcon /></Btn>
      <Btn><PrintIcon /></Btn>
      <Sep />
      <Btn><ListBackIcon /></Btn>
      <Btn><ListBackIcon accent /></Btn>
      <Btn><LockIcon /></Btn>
      <Btn><DishIcon /></Btn>
      <Btn><CubesIcon /></Btn>
      <div className="w-[6px] shrink-0 flex justify-center h-[24px]"><div className="w-px h-full bg-[#9a9a9a]" /></div>
      <div className="ml-[2px] w-[135px] h-[24px] shrink-0 bg-white rounded-[3px] border-t border-[#c8c8c8] flex items-center justify-end pr-[4px]">
        <div className="w-0 h-0 border-l-[5px] border-r-[5px] border-t-[6px] border-l-transparent border-r-transparent border-t-black" />
      </div>
      <div className="w-[18px] shrink-0 flex justify-center">
        <div className="w-0 h-0 border-t-[5px] border-b-[5px] border-l-[6px] border-t-transparent border-b-transparent border-l-black" />
      </div>
      <div className="w-[8px] shrink-0" />
      <Btn><SearchChartIcon /></Btn>
      <div className="w-[30px] shrink-0" />
      <Grip />
      <div className="w-[2px] shrink-0" />
      <Btn><DollarWinIcon /></Btn>
      <Btn><GrayWinIcon /></Btn>
      <Btn><TableWinIcon /></Btn>
      <div className="w-[10px] h-[24px] shrink-0 flex justify-center"><div className="w-px h-full bg-[#9a9a9a]" /></div>
      <Btn><CandleFanIcon /></Btn>
      <Btn><ArrowsIcon /></Btn>
      <Btn><StackedIcon /></Btn>
      <Sep />
      <Btn><HandIcon /></Btn>
      <Btn><HandIcon dark /></Btn>
      <Sep />
      <Btn><CalendarIcon /></Btn>
      <Btn><ClockBarsIcon /></Btn>
      <Btn><GreenBarsIcon /></Btn>
      <Btn><BlueSwapIcon /></Btn>
      <Btn><CandleIcon /></Btn>
      <Sep />
      <Btn><SqueezeIn /></Btn>
      <Btn><SqueezeOut /></Btn>
      <Sep />
      <Btn><ZoomIcon plus /></Btn>
      <Btn><ZoomIcon gray /></Btn>
      <Sep />
      <Btn className="bg-white border border-[#b8b8b8]"><CursorIcon /></Btn>
      <Btn><ChartTextIcon /></Btn>
      <Sep />
      <Btn><HammerIcon /></Btn>
      <Sep />
      <Btn><PlusTableIcon /></Btn>
      <Sep />
      <Btn><NoteGrayIcon /></Btn>
      <div className="w-[13px] shrink-0" />
      <Grip />
      <div className="w-[4px] shrink-0" />
      <Btn>{tool("M3 17L12 8M9 4l8 6M8 10l-2 2")}</Btn>
      <Btn>{tool("M3.500 3v14M7.500 3v14M11.500 3v14M15.500 3v14")}</Btn>
      <Btn>{tool("M2 5.500h16M2 10.500h16M2 15.500h16")}</Btn>
      <Btn>
        <I>
          <path d="M2 2.500h16M2 18.500h16" stroke="#1a3aaa" />
          <rect x="5.500" y="5.500" width="9" height="11" fill="#cfe0ff" stroke="#1a3aaa" />
          <path d="M7 8h6M7 11h6M7 14h6" stroke="#1a3aaa" strokeDasharray="1 1" />
        </I>
      </Btn>
      <Btn>{tool("M2 17a11 11 0 0114-12M6 17a7 7 0 018-8M4 9l12 9M2 17h6")}</Btn>
      <Btn>{tool("M2 17L15 3M2 17h16M7 14l5 3M10 10l8 7")}</Btn>
      <Btn>{tool("M2 3l8 3M10 2h7M10 6h7M10 10h7M10 14h5M8 16l-3 3")}</Btn>
      <Btn>{tool("M3 3l5 5M10 4v14M13 4v14M16 4v14")}</Btn>
      <Btn>{tool("M2 18L16 3M2 18h16M7 15l11-5M5 18c1-1 1-2 0-3")}</Btn>
      <Btn>{tool("M3 10h14M3 10l3-3M3 10l3 3M17 10l-3-3M17 10l-3 3")}</Btn>
      <Btn>{tool("M3 14L13 3M6 17L16 6M9 18L18 9")}</Btn>
      <Btn>{tool("M3 18V11a7 7 0 0114 0v7M3 16a2 2 0 004 0 2 2 0 004 0 2 2 0 004 0 2 2 0 002 0")}</Btn>
      <Btn>
        <I>
          <path d="M1 17h9" stroke="#111" />
          <path d="M9 16l1-4 6-9 3 2-6 9z" fill="#f0e020" stroke="#111" />
          <path d="M15 2l3 2" stroke="#e01818" strokeWidth="2" />
        </I>
      </Btn>
      <Sep />
      <Btn>{tool("M4 16c5 0 9-3 10-10")}</Btn>
      <Btn>
        <I>
          <path d="M10 3v8" stroke="#f00000" strokeWidth="3" />
          <path d="M5 11h10l-5 6z" fill="#f00000" />
        </I>
      </Btn>
      <Btn>
        <I>
          <path d="M10 9v8" stroke="#0000f0" strokeWidth="3" />
          <path d="M5 10h10l-5-7z" fill="#0000f0" />
        </I>
      </Btn>
      <Btn>
        <svg width="20" height="20" viewBox="0 0 20 20">
          <circle cx="10" cy="10" r="7" fill="none" stroke="#111" />
        </svg>
      </Btn>
      <Btn>{tool("M3.500 3.500h13v13h-13z")}</Btn>
      <Btn className="text-[12.5px] text-black">abc</Btn>
    </div>
  );
}

const ChildBtn = ({ className = "", children }) => (
  <div className={`bg-[#dbe7f2] border border-[#b4c6d6] flex items-center justify-center ${className}`}>{children}</div>
);

function ChildControls({ className = "" }) {
  return (
    <div className={`flex gap-[1px] ${className}`}>
      <ChildBtn className="w-[23px] h-[27px]">
        <div className="w-[7px] h-[3px] mt-[8px] bg-[#6a7c90]" />
      </ChildBtn>
      <ChildBtn className="w-[23px] h-[27px]">
        <svg width="11" height="11" viewBox="0 0 11 11" shapeRendering="crispEdges">
          <path d="M3.500.5h7v6h-2M.5 4.500h7v6h-7z" fill="none" stroke="#6a7c90" />
          <path d="M3 1h8M0 4h8" stroke="#6a7c90" strokeWidth="2" />
        </svg>
      </ChildBtn>
      <ChildBtn className="w-[23px] h-[27px]">
        <svg width="9" height="9" viewBox="0 0 9 9">
          <path d="M1 1l7 7M8 1L1 8" stroke="#6a7c90" strokeWidth="2" />
        </svg>
      </ChildBtn>
    </div>
  );
}

function TitleBar() {
  return (
    <div className="relative h-[28px] shrink-0 flex items-start pl-[25px] pt-[4px] border-b-2 border-[#2c3640] bg-[linear-gradient(90deg,#c8d6e0_0%,#c2d4e2_30%,#9fcaf5_42%,#9ccaf8_77%,#a8d2f8_78%,#2e5c90_80%,#386898_100%)]">
      <svg width="22" height="24" viewBox="0 0 22 24" className="absolute left-[1px] top-[1px]">
        <path d="M11 1c4 3 2 6 5 9s1 11-5 12C5 22 2 17 3 12c1-4 5-5 8-11z" fill="#1c5cc8" />
        <path d="M11 5c2 3 0 5 2 8s0 7-3 7-5-4-3-8 3-4 4-7z" fill="#8cc4f4" />
      </svg>
      <span className="font-['Open_Sans'] text-[14.3px] leading-[20px] text-[#111] whitespace-pre">TradeStation 8.1 - SP500_NASDAQ - SP500 Frame Bassi - [Chart Analysis - GS:S&P500  15 min  [CME] S&P500 FUT]</span>
      <div className="ml-auto mr-[3px] mt-[-4px] h-[25px] flex rounded-b-[5px] border border-t-0 border-[#304860] overflow-hidden">
        <div className="w-[38px] bg-[linear-gradient(180deg,#a4b4c4,#7890a8_50%,#5c7890)] flex items-center justify-center">
          <div className="w-[15px] h-[4px] mt-[9px] bg-white" />
        </div>
        <div className="w-[35px] border-l border-[#c0d0e0] bg-[linear-gradient(180deg,#a4b4c4,#7890a8_50%,#5c7890)] flex items-center justify-center">
          <svg width="17" height="15" viewBox="0 0 17 15" shapeRendering="crispEdges">
            <path d="M4.500 3V.5h12v10H13" fill="none" stroke="#fff" strokeWidth="1.500" />
            <rect x=".75" y="3.750" width="12" height="10.500" fill="none" stroke="#fff" strokeWidth="1.500" />
            <rect x="4" y="7" width="5" height="4" fill="none" stroke="#444" />
          </svg>
        </div>
        <div className="w-[63px] border-l border-[#c0d0e0] bg-[linear-gradient(180deg,#e09880,#d07058_40%,#c84828_55%,#c84828)] flex items-center justify-center">
          <svg width="18" height="15" viewBox="0 0 18 15">
            <path d="M2 1l14 13M16 1L2 14" stroke="#fff" strokeWidth="4" />
          </svg>
        </div>
      </div>
    </div>
  );
}

const menuItems = [
  ["File", "w-[36px]"],
  ["Edit", "w-[40px]"],
  ["View", "w-[46px]"],
  ["Insert", "w-[50px]"],
  ["Format", "w-[62px]"],
  ["Drawing", "w-[69px]"],
  ["Window", "w-[70px]"],
  ["Help", "w-[40px]"],
];

function MenuBar() {
  return (
    <div className="h-[30px] shrink-0 flex items-center pl-[7px] bg-[linear-gradient(180deg,#ffffff_0%,#f0f2f8_30%,#d6dcec_40%,#dbe0ee_100%)] border-b border-[#b0b4bc]">
      <svg width="20" height="18" viewBox="0 0 20 18" className="mr-[7px] shrink-0" shapeRendering="crispEdges">
        <rect width="20" height="18" fill="#08303a" />
        <path d="M2 12l3-5 3 3 4-6 4 5" fill="none" stroke="#20e060" />
        <rect x="0" y="15" width="20" height="3" fill="#801818" />
      </svg>
      {menuItems.map(([t, w]) => (
        <span key={t} className={`font-['Open_Sans'] text-[14.5px] text-[#1a1a1a] ${w}`}>
          {t}
        </span>
      ))}
      <ChildControls className="ml-auto mr-[1px]" />
    </div>
  );
}

const tabs = [
  ["SP500 100", 84],
  ["SP500 TF240", 98],
  ["SP500_TF120", 101],
  ["SP500_TF60", 92],
  ["SP500_TF30", 95],
  ["SP500 Frame Bassi", 134, true],
  ["No PREZZI 1", 97],
];

function Tab({ label, w, active }) {
  return (
    <div className="relative h-[17px] shrink-0 flex items-center justify-center pl-[2px] text-[12.5px] text-black" style={{ width: w }}>
      <svg width={w} height="17" className="absolute inset-0">
        <path d={`M0 0L7 16.500H${w - 5}L${w} 0`} fill={active ? "#fff" : "#f4f4f4"} stroke="#000" />
      </svg>
      <span className={`relative whitespace-nowrap ${active ? "font-bold" : ""}`}>{label}</span>
    </div>
  );
}

function TabBar() {
  return (
    <div className="h-[18px] shrink-0 flex bg-[#f0f0f0] border-t border-black">
      <div className="w-[68px] shrink-0 flex items-center gap-[1px] pl-[1px]">
        {["M5 2v9M12 2L7 6.500l5 4.500z", "M10 2L5 6.500l5 4.500z", "M5 2l5 4.500L5 11z", "M12 2v9M4 2l5 4.500L4 11z"].map((d) => (
          <div key={d} className="w-[15px] h-[16px] bg-[#e6e6e6] border border-[#b0b0b0] flex items-center justify-center">
            <svg width="14" height="13" viewBox="0 0 14 13">
              <path d={d} fill="#777" stroke="#777" strokeWidth=".6" />
            </svg>
          </div>
        ))}
      </div>
      {tabs.map(([l, w, a]) => (
        <Tab key={l} label={l} w={w} active={a} />
      ))}
    </div>
  );
}

const statusCells = [
  ["Acct:", "w-[47px]", "text-black"],
  ["Open Psns:", "w-[91px] border-l pl-[4px]", "text-black"],
  ["DT BP:", "w-[62px] border-l pl-[4px]", "text-black"],
  ["Purch Pwr:", "w-[87px] border-l pl-[4px]", "text-black"],
  ["Closed P/L:", "w-[94px] border-l pl-[4px]", "text-black"],
  ["RT TE:", "w-[59px] border-l pl-[4px]", "text-black"],
  ["Open P/L:", "w-[84px] border-l pl-[4px]", "text-black"],
  ["ORDER BAR", "w-[88px] border-l pl-[4px]", "text-[#0a8a30]"],
  ["MACROS", "w-[69px] border-l pl-[4px]", "text-[#0a8a30]"],
];

function StatusBar() {
  return (
    <div className="h-[22px] shrink-0 flex items-stretch bg-[#f0f0f0] border-t border-[#a0a0a0] text-[14px] leading-[21px] whitespace-nowrap">
      <div className="flex-1 pl-[2px] text-black">For Help, press F1</div>
      {statusCells.map(([t, c, color]) => (
        <div key={t} className={`border-[#c4c4c4] ${c} ${color}`}>
          {t}
        </div>
      ))}
      <div className="w-[19px] border-l border-[#c4c4c4] flex items-start justify-center pt-[3px]">
        <div className="w-[9px] h-[10px] rounded-full bg-[radial-gradient(circle_at_40%_30%,#ff8080,#e00000_60%,#800000)]" />
      </div>
      <div className="w-[123px] border-l border-[#c4c4c4] pl-[4px] text-black text-[14.5px]">26/09/2022 14:44</div>
    </div>
  );
}

function ScrollBar() {
  return (
    <div className="h-[24px] shrink-0 bg-[#f0f0f0] flex items-center pl-[8px] pr-[7px]">
      <div className="w-0 h-0 border-t-[5px] border-b-[5px] border-r-[5px] border-t-transparent border-b-transparent border-r-[#555]" />
      <div className="ml-auto w-[19px] h-[20px] bg-[#dedede] border border-[#a8a8a8] rounded-[2px] flex items-center justify-center gap-[2px]">
        <div className="w-px h-[9px] bg-[#666]" />
        <div className="w-px h-[9px] bg-[#666]" />
        <div className="w-px h-[9px] bg-[#666]" />
      </div>
      <div className="ml-[8px] w-0 h-0 border-t-[5px] border-b-[5px] border-l-[5px] border-t-transparent border-b-transparent border-l-[#555]" />
    </div>
  );
}

export default function App() {
  return (
    <div className="w-[1920px] h-[1080px] overflow-hidden flex flex-col bg-[#f0f0f0] font-['Liberation_Sans',Arial,sans-serif]">
      <TitleBar />
      <MenuBar />
      <Toolbar />
      <div className="relative shrink-0 flex flex-col bg-[#020204] border-l-2 border-[#8a8a8a] ml-0">
        <div className="relative h-[470px] flex -ml-[2px]">
          <PricePlot />
          <Axis1 />
          <Legend items={priceLegend} className="top-[2px]" />
          <ChildControls className="absolute left-[1857px] top-[8px]" />
        </div>
        <div className="relative h-[216px] flex -ml-[2px]">
          <MacdPlot />
          <Axis2 />
          <Legend items={macdLegend} className="top-0" />
        </div>
        <div className="relative h-[215px] flex -ml-[2px]">
          <CciPlot />
          <Axis3 />
          <Legend items={cciLegend} className="top-0" />
        </div>
        <div className="-ml-[2px]">
          <XAxis />
        </div>
      </div>
      <ScrollBar />
      <TabBar />
      <StatusBar />
    </div>
  );
}
